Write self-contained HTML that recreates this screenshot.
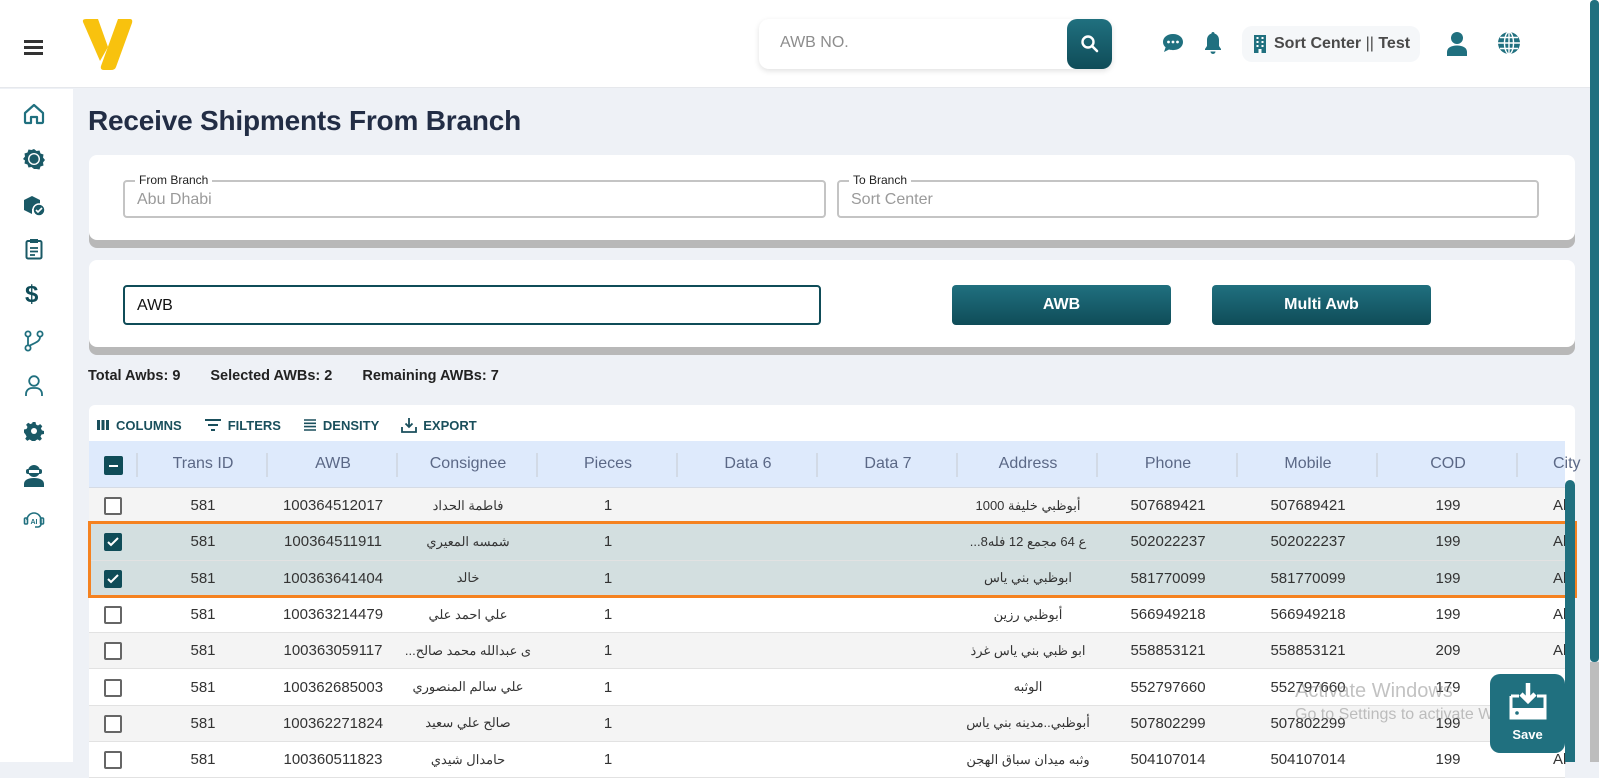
<!DOCTYPE html>
<html><head><meta charset="utf-8"><style>
*{box-sizing:border-box;margin:0;padding:0}
body{width:1599px;height:762px;overflow:hidden;background:#eef1f6;font-family:"Liberation Sans","Noto Sans CJK SC",sans-serif;position:relative;color:#222}
.abs{position:absolute}
.hdr{left:0;top:0;width:1599px;height:88px;background:#fff;border-bottom:1px solid #e6e8ec}
.side{left:0;top:89px;width:73px;height:673px;background:#fff}
.card{background:#fff;border-radius:8px;box-shadow:0 8px 0 #b8b8b8}
.fld{border:2px solid #c4c4c4;border-radius:4px;height:38px}
.fld .lab{position:absolute;top:-9px;left:10px;background:#fff;padding:0 4px;font-size:12px;color:#222}
.fld .val{position:absolute;left:12px;top:9px;font-size:16px;color:#9a9a9a}
.btn{background:linear-gradient(#20707f,#0f4c58);color:#fff;font-weight:bold;font-size:16px;border-radius:4px;display:flex;align-items:center;justify-content:center}
.row{position:absolute;left:89px;width:1476px;height:36.3px;border-bottom:1px solid #e2e2e2;font-size:15px;color:#333}
.row span,.th span{position:absolute;top:0;height:100%;display:flex;align-items:center;justify-content:center;white-space:nowrap}
.th{position:absolute;left:89px;top:441px;width:1476px;height:47px;background:#deeafc;color:#5b6886;font-size:16px;border-bottom:1px solid #d5dbe5}
.cb{width:18px;height:18px;border:2px solid #666;border-radius:2px;position:absolute;left:15px;top:9px;background:#fff}
.cbc{background:#0f4c58;border-color:#0f4c58}
.ico{position:absolute;color:#20707f}
.sep{position:absolute;top:12px;width:2px;height:24px;background:#d2dae6}
</style></head><body>
<div class="abs hdr"></div>
<div class="abs" style="left:24px;top:40px;width:19px;height:3px;background:#333;box-shadow:0 6px 0 #333,0 12px 0 #333"></div>
<svg class="abs" style="left:80px;top:17px" width="54" height="54" viewBox="0 0 54 54"><path d="M3 5 Q2 2 6 2 L18 2 L28 30 L20 44 Z" fill="#f8c20e"/><path d="M38 2 L50 2 Q53 2 52 6 L36 50 Q35 53 31 53 L24 53 Q20 53 21 49 Z" fill="#f8c20e"/></svg>
<div class="abs" style="left:759px;top:19px;width:353px;height:50px;background:#fff;border-radius:10px;box-shadow:0 2px 6px rgba(0,0,0,.12)"></div>
<div class="abs" style="left:780px;top:34px;font-size:16px;color:#8d8d8d">AWB NO.</div>
<div class="abs btn" style="left:1067px;top:19px;width:45px;height:50px;border-radius:10px"><svg width="20" height="20" viewBox="0 0 20 20"><circle cx="8" cy="8" r="5.5" stroke="#fff" stroke-width="2.4" fill="none"/><path d="M12 12l5 5" stroke="#fff" stroke-width="2.6" stroke-linecap="round"/></svg></div>
<svg class="abs" style="left:1162px;top:33px" width="22" height="20" viewBox="0 0 22 20"><path d="M11 1C5 1 1 4.5 1 9c0 2.2 1 4 2.6 5.3L2 19l5-2.5c1.2.4 2.6.6 4 .6 6 0 10-3.6 10-8.1S17 1 11 1z" fill="#20707f"/><circle cx="6.5" cy="9" r="1.4" fill="#fff"/><circle cx="11" cy="9" r="1.4" fill="#fff"/><circle cx="15.5" cy="9" r="1.4" fill="#fff"/></svg>
<svg class="abs" style="left:1203px;top:31px" width="20" height="24" viewBox="0 0 20 24"><path d="M10 1c-1 0-1.6.7-1.6 1.6C5.5 3.4 4 6 4 9v6l-2 3v1h16v-1l-2-3V9c0-3-1.5-5.6-4.4-6.4C11.6 1.7 11 1 10 1z" fill="#20707f"/><path d="M7.5 20.5a2.5 2.5 0 005 0z" fill="#20707f"/></svg>
<div class="abs" style="left:1242px;top:26px;width:178px;height:36px;background:#f5f7f9;border-radius:10px"></div>
<svg class="abs" style="left:1254px;top:35px" width="12" height="18" viewBox="0 0 12 18"><rect x="0" y="0" width="12" height="18" fill="#20707f"/><g fill="#fff"><rect x="2.5" y="2" width="2" height="2"/><rect x="7.5" y="2" width="2" height="2"/><rect x="2.5" y="6" width="2" height="2"/><rect x="7.5" y="6" width="2" height="2"/><rect x="2.5" y="10" width="2" height="2"/><rect x="7.5" y="10" width="2" height="2"/><rect x="4.5" y="14" width="3" height="4"/></g></svg>
<div class="abs" style="left:1274px;top:35px;font-size:16px;font-weight:bold;color:#4a4a4a">Sort Center <span style="font-weight:normal">||</span> Test</div>
<svg class="abs" style="left:1446px;top:31px" width="22" height="26" viewBox="0 0 22 26"><circle cx="11" cy="7" r="6" fill="#20707f"/><path d="M1 25v-4c0-4 4-6.5 10-6.5s10 2.5 10 6.5v4z" fill="#20707f"/></svg>
<svg class="abs" style="left:1497px;top:31px" width="24" height="24" viewBox="0 0 24 24"><circle cx="12" cy="12" r="11" fill="#20707f"/><g stroke="#fff" stroke-width="1.4" fill="none"><ellipse cx="12" cy="12" rx="4.5" ry="11"/><path d="M12 1v22M1 12h22M3 6.5h18M3 17.5h18"/></g></svg>
<div class="abs" style="left:1590px;top:0;width:9px;height:662px;background:#20707f;border-radius:4px"></div>
<div class="abs" style="left:1590px;top:662px;width:9px;height:100px;background:#bdbdbd"></div>

<div class="abs side"></div>
<svg class="ico" style="left:23px;top:103px" width="22" height="22" viewBox="0 0 22 22"><path d="M2 10L11 2l9 8v9a1 1 0 01-1 1h-5v-6H8v6H3a1 1 0 01-1-1z" fill="none" stroke="#20707f" stroke-width="2.2" stroke-linejoin="round"/></svg>
<svg class="ico" style="left:23px;top:148px" width="22" height="22" viewBox="0 0 22 22"><path d="M11 1l2.5 2 3-.5 1 3 3 1-.5 3 2 2.5-2 2.5.5 3-3 1-1 3-3-.5L11 21l-2.5-2-3 .5-1-3-3-1 .5-3L0 11l2-2.5-.5-3 3-1 1-3 3 .5z" fill="#1a5966"/><circle cx="11" cy="11" r="6" fill="#fff"/><circle cx="11" cy="11" r="4.6" fill="#1a5966"/></svg>
<svg class="ico" style="left:23px;top:194px" width="23" height="23" viewBox="0 0 23 23"><path d="M1 6l8-4 8 4v5l-8 4-8-4z" fill="#1a5966"/><path d="M1 9v7l8 4v-7z" fill="#1a5966"/><circle cx="16" cy="16" r="6" fill="#1a5966" stroke="#fff" stroke-width="1.5"/><path d="M13 16l2 2 4-4" stroke="#fff" stroke-width="1.6" fill="none"/></svg>
<svg class="ico" style="left:25px;top:238px" width="18" height="22" viewBox="0 0 18 22"><rect x="1.5" y="3" width="15" height="17.5" rx="1.5" fill="none" stroke="#1a5966" stroke-width="2"/><rect x="5" y="1" width="8" height="4" fill="#1a5966"/><path d="M5 10h8M5 13.5h8M5 17h5" stroke="#1a5966" stroke-width="1.8"/></svg>
<div class="abs" style="left:25px;top:281px;font-size:24px;font-weight:bold;color:#0f4c58">$</div>
<svg class="ico" style="left:24px;top:330px" width="20" height="22" viewBox="0 0 20 22"><g fill="none" stroke="#20707f" stroke-width="1.8"><circle cx="4" cy="4" r="2.6"/><circle cx="16" cy="4" r="2.6"/><circle cx="4" cy="18" r="2.6"/><path d="M4 7v8.5M16 7c0 5-6 6-11 9"/></g></svg>
<svg class="ico" style="left:24px;top:375px" width="20" height="22" viewBox="0 0 20 22"><g fill="none" stroke="#20707f" stroke-width="1.8"><circle cx="10" cy="6" r="4.8"/><path d="M2 21v-2a6 6 0 016-6h4a6 6 0 016 6v2"/></g></svg>
<svg class="ico" style="left:24px;top:421px" width="20" height="20" viewBox="0 0 20 20"><path d="M8.5 1h3l.5 2.5 2 1 2.2-1.4 2.1 2.1L16.9 7.4l1 2 2.1.6v3l-2.5.5-1 2 1.4 2.2-2.1 2.1-2.2-1.4-2 1-.6 2.6h-3l-.5-2.5-2-1-2.2 1.4-2.1-2.1 1.4-2.2-1-2L0 11.5v-3l2.5-.5 1-2L2.1 3.8 4.2 1.7 6.4 3.1l2-1z" fill="#1a5966"/><circle cx="10" cy="10" r="3" fill="#fff"/></svg>
<svg class="ico" style="left:23px;top:463px" width="22" height="24" viewBox="0 0 22 24"><circle cx="11" cy="8" r="6" fill="#1a5966"/><rect x="3" y="6" width="16" height="5" rx="2" fill="#1a5966"/><rect x="6" y="7" width="10" height="3" fill="#fff"/><path d="M1 24v-3c0-4 4-6 10-6s10 2 10 6v3z" fill="#1a5966"/></svg>
<svg class="ico" style="left:23px;top:509px" width="22" height="22" viewBox="0 0 22 22"><g fill="none" stroke="#20707f" stroke-width="1.6"><path d="M4 11a7 7 0 0114 0v4a3 3 0 01-3 3h-3"/><rect x="1.5" y="9" width="3" height="6" rx="1"/><rect x="17.5" y="9" width="3" height="6" rx="1"/></g><text x="11" y="15" font-size="7" font-weight="bold" text-anchor="middle" fill="#20707f" font-family="Liberation Sans">AI</text></svg>

<div class="abs" style="left:88px;top:105px;font-size:28px;font-weight:bold;color:#222d45;letter-spacing:-0.2px">Receive Shipments From Branch</div>

<div class="abs card" style="left:89px;top:155px;width:1486px;height:85px"></div>
<div class="abs fld" style="left:123px;top:180px;width:703px"><div class="lab">From Branch</div><div class="val">Abu Dhabi</div></div>
<div class="abs fld" style="left:837px;top:180px;width:702px"><div class="lab">To Branch</div><div class="val">Sort Center</div></div>

<div class="abs card" style="left:89px;top:260px;width:1486px;height:87px"></div>
<div class="abs" style="left:123px;top:285px;width:698px;height:40px;border:2px solid #0f4c58;border-radius:4px;font-size:16px;padding:10px 12px;color:#111">AWB</div>
<div class="abs btn" style="left:952px;top:285px;width:219px;height:40px">AWB</div>
<div class="abs btn" style="left:1212px;top:285px;width:219px;height:40px">Multi Awb</div>

<div class="abs" style="left:88px;top:368px;font-size:14.5px;font-weight:bold;color:#222;white-space:nowrap">Total Awbs: 9<span style="margin-left:30px">Selected AWBs: 2</span><span style="margin-left:30px">Remaining AWBs: 7</span></div>

<div class="abs" style="left:89px;top:405px;width:1486px;height:357px;background:#fff;border-radius:6px 6px 0 0"></div>
<div class="abs" style="left:96px;top:417px;font-size:13px;font-weight:bold;color:#1a4f5c;display:flex;align-items:center;gap:6px;white-space:nowrap">
<svg width="14" height="12" viewBox="0 0 14 12"><path d="M1 1h3v10H1zM5.5 1h3v10h-3zM10 1h3v10h-3z" fill="#1a4f5c"/></svg><span style="margin-right:16px">COLUMNS</span>
<svg width="18" height="14" viewBox="0 0 18 14"><path d="M1 2h16M4 7h10M7 12h4" stroke="#1a4f5c" stroke-width="2"/></svg><span style="margin-right:16px">FILTERS</span>
<svg width="14" height="14" viewBox="0 0 14 14"><path d="M1 2h12M1 5.3h12M1 8.6h12M1 12h12" stroke="#1a4f5c" stroke-width="1.6"/></svg><span style="margin-right:16px">DENSITY</span>
<svg width="16" height="16" viewBox="0 0 16 16"><path d="M8 1v9M4.5 6.5L8 10l3.5-3.5M1 10v5h14v-5" stroke="#1a4f5c" stroke-width="1.8" fill="none"/></svg><span>EXPORT</span></div>

<div class="th">
<div class="cb cbc" style="top:15px;left:15px;width:19px;height:19px"><div style="position:absolute;left:3px;top:7px;width:9px;height:2px;background:#fff"></div></div>
<div class="sep" style="left:47px"></div><div class="sep" style="left:177px"></div><div class="sep" style="left:307px"></div><div class="sep" style="left:447px"></div><div class="sep" style="left:587px"></div><div class="sep" style="left:727px"></div><div class="sep" style="left:867px"></div><div class="sep" style="left:1007px"></div><div class="sep" style="left:1147px"></div><div class="sep" style="left:1287px"></div><div class="sep" style="left:1427px"></div>
<span style="left:49px;width:130px">Trans ID</span><span style="left:179px;width:130px">AWB</span><span style="left:309px;width:140px">Consignee</span><span style="left:449px;width:140px">Pieces</span><span style="left:589px;width:140px">Data 6</span><span style="left:729px;width:140px">Data 7</span><span style="left:869px;width:140px">Address</span><span style="left:1009px;width:140px">Phone</span><span style="left:1149px;width:140px">Mobile</span><span style="left:1289px;width:140px">COD</span><span style="left:1464px;justify-content:flex-start">City</span>
</div>

<div class="row" style="top:488px;background:#f4f4f4"><div class="cb"></div><span style="left:49px;width:130px">581</span><span style="left:179px;width:130px">100364512017</span><span style="left:309px;width:140px;font-size:13px">فاطمة الحداد</span><span style="left:449px;width:140px">1</span><span style="left:869px;width:140px;font-size:13px">أبوظبي خليفة 1000</span><span style="left:1009px;width:140px">507689421</span><span style="left:1149px;width:140px">507689421</span><span style="left:1289px;width:140px">199</span><span style="left:1464px">Al</span></div>
<div class="row" style="top:524.3px;background:#d3dfe0"><div class="cb cbc"><svg width="14" height="14" viewBox="0 0 14 14" style="position:absolute;left:0;top:0"><path d="M2 7l3 3 7-7" stroke="#fff" stroke-width="2" fill="none"/></svg></div><span style="left:49px;width:130px">581</span><span style="left:179px;width:130px">100364511911</span><span style="left:309px;width:140px;font-size:13px">شمسه المعيري</span><span style="left:449px;width:140px">1</span><span style="left:869px;width:140px;font-size:13px">...ع 64 مجمع 12 فله8</span><span style="left:1009px;width:140px">502022237</span><span style="left:1149px;width:140px">502022237</span><span style="left:1289px;width:140px">199</span><span style="left:1464px">Al</span></div>
<div class="row" style="top:560.6px;background:#d3dfe0"><div class="cb cbc"><svg width="14" height="14" viewBox="0 0 14 14" style="position:absolute;left:0;top:0"><path d="M2 7l3 3 7-7" stroke="#fff" stroke-width="2" fill="none"/></svg></div><span style="left:49px;width:130px">581</span><span style="left:179px;width:130px">100363641404</span><span style="left:309px;width:140px;font-size:13px">خالد</span><span style="left:449px;width:140px">1</span><span style="left:869px;width:140px;font-size:13px">ابوظبي بني ياس</span><span style="left:1009px;width:140px">581770099</span><span style="left:1149px;width:140px">581770099</span><span style="left:1289px;width:140px">199</span><span style="left:1464px">Al</span></div>
<div class="row" style="top:596.9px;background:#fff"><div class="cb"></div><span style="left:49px;width:130px">581</span><span style="left:179px;width:130px">100363214479</span><span style="left:309px;width:140px;font-size:13px">علي احمد علي</span><span style="left:449px;width:140px">1</span><span style="left:869px;width:140px;font-size:13px">أبوظبي رزين</span><span style="left:1009px;width:140px">566949218</span><span style="left:1149px;width:140px">566949218</span><span style="left:1289px;width:140px">199</span><span style="left:1464px">Al</span></div>
<div class="row" style="top:633.2px;background:#f4f4f4"><div class="cb"></div><span style="left:49px;width:130px">581</span><span style="left:179px;width:130px">100363059117</span><span style="left:309px;width:140px;font-size:13px">...ى عبدالله محمد صالح</span><span style="left:449px;width:140px">1</span><span style="left:869px;width:140px;font-size:13px">ابو ظبي بني ياس غرذ</span><span style="left:1009px;width:140px">558853121</span><span style="left:1149px;width:140px">558853121</span><span style="left:1289px;width:140px">209</span><span style="left:1464px">Al</span></div>
<div class="row" style="top:669.5px;background:#fff"><div class="cb"></div><span style="left:49px;width:130px">581</span><span style="left:179px;width:130px">100362685003</span><span style="left:309px;width:140px;font-size:13px">علي سالم المنصوري</span><span style="left:449px;width:140px">1</span><span style="left:869px;width:140px;font-size:13px">الوثبه</span><span style="left:1009px;width:140px">552797660</span><span style="left:1149px;width:140px">552797660</span><span style="left:1289px;width:140px">179</span></div>
<div class="row" style="top:705.8px;background:#f4f4f4"><div class="cb"></div><span style="left:49px;width:130px">581</span><span style="left:179px;width:130px">100362271824</span><span style="left:309px;width:140px;font-size:13px">صالح علي سعيد</span><span style="left:449px;width:140px">1</span><span style="left:869px;width:140px;font-size:13px">أبوظبي..مدينه بني ياس</span><span style="left:1009px;width:140px">507802299</span><span style="left:1149px;width:140px">507802299</span><span style="left:1289px;width:140px">199</span></div>
<div class="row" style="top:742.1px;background:#fff"><div class="cb"></div><span style="left:49px;width:130px">581</span><span style="left:179px;width:130px">100360511823</span><span style="left:309px;width:140px;font-size:13px">حامدال شيدي</span><span style="left:449px;width:140px">1</span><span style="left:869px;width:140px;font-size:13px">وثبه ميدان سباق الهجن</span><span style="left:1009px;width:140px">504107014</span><span style="left:1149px;width:140px">504107014</span><span style="left:1289px;width:140px">199</span><span style="left:1464px">Al</span></div>

<div class="abs" style="left:88px;top:521px;width:1489px;height:77px;border:3px solid #f58220"></div>
<div class="abs" style="left:1565px;top:480px;width:10px;height:282px;background:#20707f;border-radius:5px 5px 0 0"></div>

<div class="abs" style="left:1295px;top:680px;font-size:20px;color:rgba(120,120,120,.45)">Activate Windows</div>
<div class="abs" style="left:1295px;top:706px;font-size:16px;color:rgba(120,120,120,.45);white-space:nowrap">Go to Settings to activate Windows.</div>
<div class="abs" style="left:1490px;top:674px;width:75px;height:79px;background:#20707f;border-radius:10px"></div>
<svg class="abs" style="left:1507px;top:681px" width="42" height="40" viewBox="0 0 42 40"><path d="M4 15h8M30 15h8v22H4V15" fill="none" stroke="#fff" stroke-width="3"/><rect x="4" y="27" width="34" height="10" fill="#fff"/><path d="M21 2v18M14 13l7 7 7-7" stroke="#fff" stroke-width="4.5" fill="none"/><circle cx="10" cy="32" r="1.8" fill="#20707f"/></svg>
<div class="abs" style="left:1490px;top:727px;width:75px;text-align:center;color:#fff;font-weight:bold;font-size:13px">Save</div>
</body></html>
